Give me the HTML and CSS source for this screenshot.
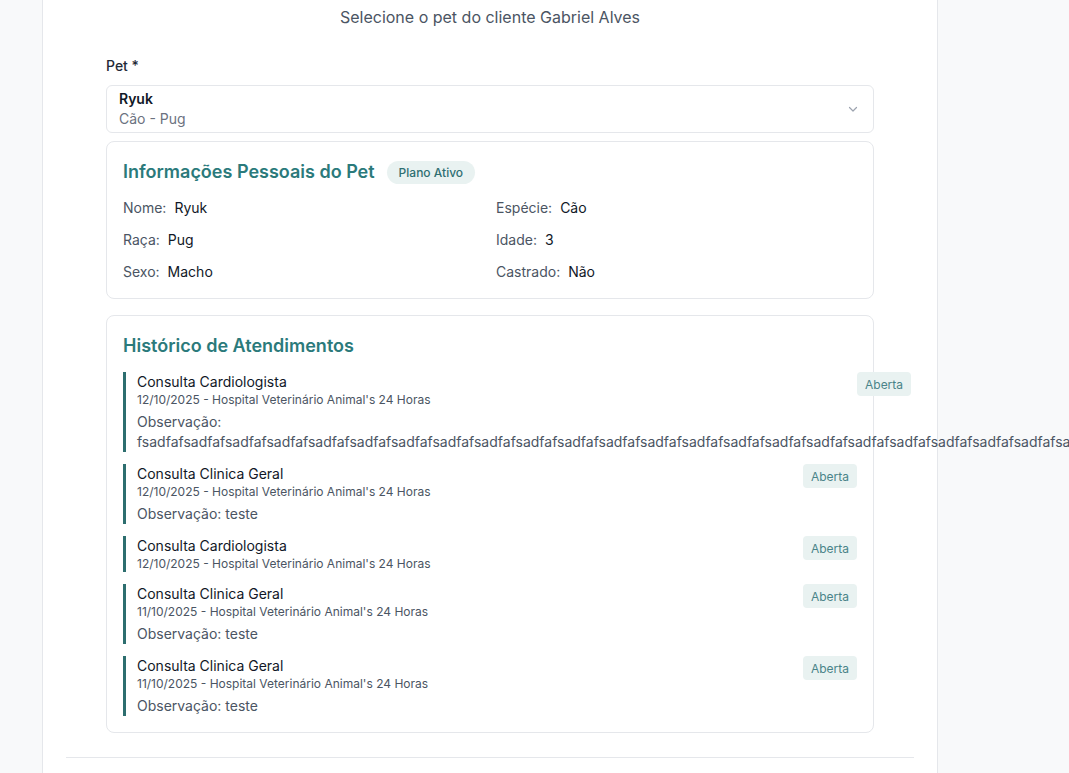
FILE: index.html
```html
<!DOCTYPE html>
<html lang="pt-BR">
<head>
<meta charset="utf-8">
<title>Selecionar pet</title>
<link rel="stylesheet" href="styles.css">
</head>
<body>
<div class="page">
  <div class="panel">
    <p class="subtitle">Selecione o pet do cliente Gabriel Alves</p>
    <div class="body">
      <label class="field-label">Pet *</label>
      <div class="select">
        <div class="select-text">
          <div class="select-name">Ryuk</div>
          <div class="select-sub">Cão - Pug</div>
        </div>
        <svg class="chevron" width="12" height="12" viewBox="0 0 12 12"><path d="M2.5 4.5 L6 8 L9.5 4.5" fill="none" stroke="#9ca3af" stroke-width="1.2" stroke-linecap="round" stroke-linejoin="round"/></svg>
      </div>

      <section class="card">
        <div class="card-head">
          <h2 class="card-title">Informações Pessoais do Pet</h2>
          <span class="pill">Plano Ativo</span>
        </div>
        <div class="info-grid">
          <div class="info"><span class="info-label">Nome:</span><span class="info-value">Ryuk</span></div>
          <div class="info"><span class="info-label">Espécie:</span><span class="info-value">Cão</span></div>
          <div class="info"><span class="info-label">Raça:</span><span class="info-value">Pug</span></div>
          <div class="info"><span class="info-label">Idade:</span><span class="info-value">3</span></div>
          <div class="info"><span class="info-label">Sexo:</span><span class="info-value">Macho</span></div>
          <div class="info"><span class="info-label">Castrado:</span><span class="info-value">Não</span></div>
        </div>
      </section>

      <section class="card">
        <h2 class="card-title history-title">Histórico de Atendimentos</h2>
        <div class="history">
          <div class="item">
            <div class="item-body">
              <div class="item-title">Consulta Cardiologista</div>
              <div class="item-date">12/10/2025 - Hospital Veterinário Animal's 24 Horas</div>
              <div class="item-obs">Observação: fsadfafsadfafsadfafsadfafsadfafsadfafsadfafsadfafsadfafsadfafsadfafsadfafsadfafsadfafsadfafsadfafsadfafsadfafsadfafsadfafsadfafsadfafsadfafsadfafsadfafsadfafsadfafsadfafsadfafsadfafsadfafsadfafsadfafsadfafsadfafsadfa</div>
            </div>
            <span class="status">Aberta</span>
          </div>
          <div class="item">
            <div class="item-body">
              <div class="item-title">Consulta Clinica Geral</div>
              <div class="item-date">12/10/2025 - Hospital Veterinário Animal's 24 Horas</div>
              <div class="item-obs">Observação: teste</div>
            </div>
            <span class="status">Aberta</span>
          </div>
          <div class="item">
            <div class="item-body">
              <div class="item-title">Consulta Cardiologista</div>
              <div class="item-date">12/10/2025 - Hospital Veterinário Animal's 24 Horas</div>
            </div>
            <span class="status">Aberta</span>
          </div>
          <div class="item">
            <div class="item-body">
              <div class="item-title">Consulta Clinica Geral</div>
              <div class="item-date">11/10/2025 - Hospital Veterinário Animal's 24 Horas</div>
              <div class="item-obs">Observação: teste</div>
            </div>
            <span class="status">Aberta</span>
          </div>
          <div class="item">
            <div class="item-body">
              <div class="item-title">Consulta Clinica Geral</div>
              <div class="item-date">11/10/2025 - Hospital Veterinário Animal's 24 Horas</div>
              <div class="item-obs">Observação: teste</div>
            </div>
            <span class="status">Aberta</span>
          </div>
        </div>
      </section>
    </div>
    <div class="footer-line"></div>
  </div>
</div>
</body>
</html>
```

FILE: styles.css
```css
html, body {
  margin: 0;
  padding: 0;
  height: 100%;
  overflow: hidden;
  background: #f8f9fa;
  font-family: Inter, "Noto Sans", "Liberation Sans", sans-serif;
  color: #1f2937;
}

.page {
  height: 773px;
  padding-left: 42px;
  box-sizing: border-box;
}

.panel {
  width: 896px;
  height: 100%;
  box-sizing: border-box;
  background: #ffffff;
  border-left: 1px solid #e5e7eb;
  border-right: 1px solid #e5e7eb;
  padding: 5px 23px 0;
}

.subtitle {
  margin: 0;
  text-align: center;
  font-size: 16px;
  line-height: 24px;
  color: #4b5563;
}

.body {
  padding: 27px 40px 0;
  display: flex;
  flex-direction: column;
}

.field-label {
  font-size: 14px;
  line-height: 20px;
  font-weight: 500;
  color: #1f2937;
  margin-bottom: 9px;
}

.select {
  display: flex;
  align-items: center;
  justify-content: space-between;
  border: 1px solid #e5e7eb;
  border-radius: 6px;
  padding: 3px 14px 3px 12px;
  height: 48px;
  box-sizing: border-box;
}

.select-name {
  font-size: 14px;
  line-height: 20px;
  font-weight: 600;
  color: #111827;
}

.select-sub {
  font-size: 14px;
  line-height: 20px;
  color: #6b7280;
}

.chevron {
  display: block;
}

.card {
  margin-top: 8px;
  border: 1px solid #e5e7eb;
  border-radius: 8px;
  padding: 16px;
}

.card + .card {
  margin-top: 16px;
}

.card-head {
  display: flex;
  align-items: center;
  gap: 12px;
}

.card-title {
  margin: 0;
  font-size: 18px;
  line-height: 28px;
  font-weight: 600;
  color: #2b7a7b;
}

.pill {
  display: inline-flex;
  align-items: center;
  height: 23px;
  padding: 0 12px;
  border-radius: 999px;
  background: #e9f2f1;
  color: #2f6f72;
  font-size: 12px;
  font-weight: 500;
}

.info-grid {
  margin-top: 12px;
  display: grid;
  grid-template-columns: 1fr 1fr;
  column-gap: 12px;
  row-gap: 12px;
}

.info {
  display: flex;
  gap: 8px;
  font-size: 14px;
  line-height: 20px;
}

.info-label {
  color: #4b5563;
}

.info-value {
  color: #111827;
}

.history-title {
  margin-bottom: 12px;
}

.history {
  display: flex;
  flex-direction: column;
  gap: 12px;
}

.item {
  display: flex;
  align-items: flex-start;
  border-left: 3px solid #2d6e6f;
  padding-left: 11px;
}

.item-body {
  flex: 1;
  max-width: 100%;
}

.item-title {
  font-size: 14px;
  line-height: 20px;
  color: #111827;
}

.item-date {
  font-size: 12px;
  line-height: 16px;
  color: #4b5563;
}

.item-obs {
  margin-top: 4px;
  font-size: 14px;
  line-height: 20px;
  color: #4b5563;
}

.status {
  flex-shrink: 0;
  height: 24px;
  display: inline-flex;
  align-items: center;
  padding: 0 8px;
  border-radius: 4px;
  background: #e9f2f1;
  color: #4a8489;
  font-size: 12px;
}

.footer-line {
  margin-top: 24px;
  border-top: 1px solid #e5e7eb;
}
```
